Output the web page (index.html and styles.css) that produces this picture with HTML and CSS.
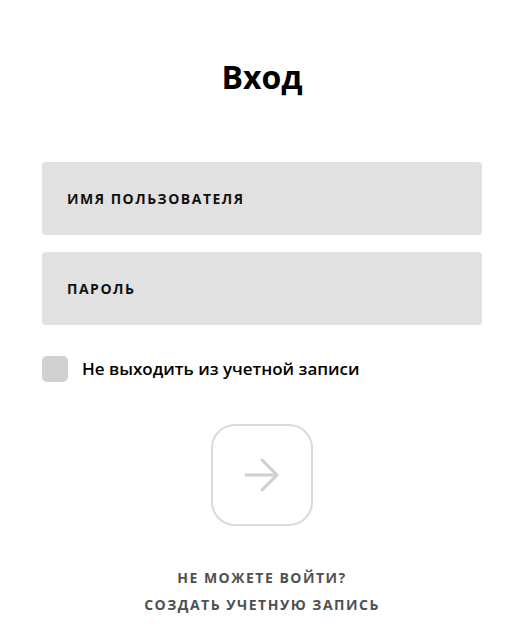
FILE: index.html
```html
<!DOCTYPE html>
<html lang="ru">
<head>
<meta charset="utf-8">
<link rel="stylesheet" href="styles.css">
</head>
<body>
<main class="page">
  <h1 class="title">Вход</h1>
  <form class="form">
    <div class="field"><span class="field-label">ИМЯ ПОЛЬЗОВАТЕЛЯ</span></div>
    <div class="field"><span class="field-label">ПАРОЛЬ</span></div>
    <label class="remember">
      <span class="checkbox"></span>
      <span class="remember-text">Не выходить из учетной записи</span>
    </label>
    <div class="submit-wrap">
      <button type="button" class="submit">
        <svg width="36" height="36" viewBox="0 0 36 36" fill="none" stroke="#cfcfcf" stroke-width="3" stroke-linecap="round" stroke-linejoin="round">
          <path d="M2 18 H33"/>
          <path d="M18 3 L33 18 L18 33"/>
        </svg>
      </button>
    </div>
  </form>
  <nav class="links">
    <a class="link">НЕ МОЖЕТЕ ВОЙТИ?</a>
    <a class="link">СОЗДАТЬ УЧЕТНУЮ ЗАПИСЬ</a>
  </nav>
</main>
</body>
</html>
```
FILE: styles.css
```css
html, body {
  margin: 0;
  padding: 0;
  background: #ffffff;
}
body {
  font-family: "Open Sans", "Noto Sans", sans-serif;
  color: #111;
}
.page {
  padding: 55px 47px 0 42px;
  display: flex;
  flex-direction: column;
}
.title {
  margin: 0;
  text-align: center;
  font-size: 32px;
  font-weight: 700;
  line-height: 44px;
  color: #000;
}
.form {
  margin-top: 63px;
  display: flex;
  flex-direction: column;
}
.field {
  height: 73px;
  background: #e1e1e1;
  border-radius: 4px;
  display: flex;
  align-items: center;
  padding-left: 25px;
  margin-bottom: 17px;
}
.field-label {
  font-size: 14px;
  font-weight: 700;
  letter-spacing: 1.5px;
  color: #111;
}
.remember {
  margin-top: 14px;
  display: flex;
  align-items: center;
  gap: 14px;
}
.checkbox {
  width: 26px;
  height: 26px;
  border-radius: 5px;
  background: #d1d1d1;
}
.remember-text {
  font-size: 17px;
  font-weight: 600;
  color: #000;
  position: relative;
  top: -1px;
}
.submit-wrap {
  margin-top: 42px;
  display: flex;
  justify-content: center;
}
.submit {
  width: 102px;
  height: 102px;
  border: 2px solid #dadada;
  border-radius: 24px;
  background: #fff;
  display: flex;
  align-items: center;
  justify-content: center;
  padding: 0;
}
.links {
  margin-top: 43px;
  display: flex;
  flex-direction: column;
  align-items: center;
  gap: 9px;
}
.link {
  font-size: 14px;
  font-weight: 700;
  letter-spacing: 1.5px;
  color: #505050;
  line-height: 18px;
}
```
